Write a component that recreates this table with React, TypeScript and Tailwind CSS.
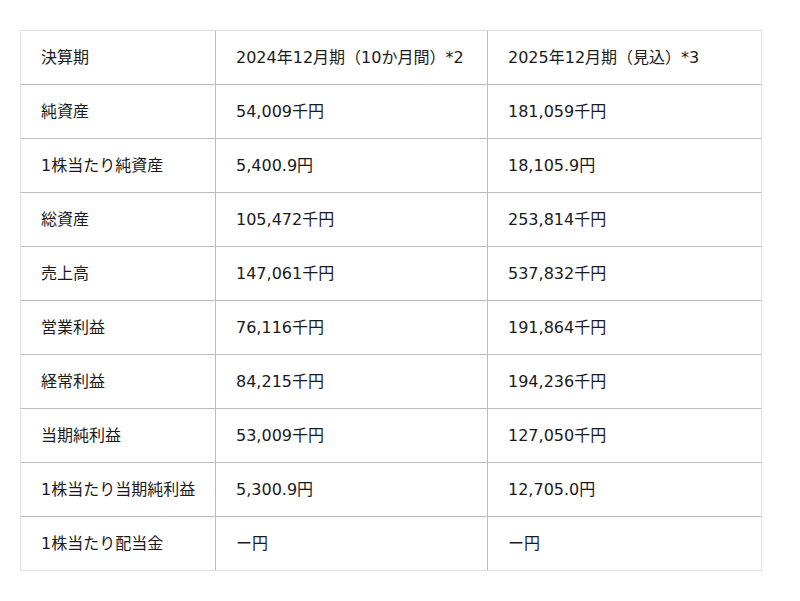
const rows: [string, string, string][] = [
  ["決算期", "2024年12月期（10か月間）*2", "2025年12月期（見込）*3"],
  ["純資産", "54,009千円", "181,059千円"],
  ["1株当たり純資産", "5,400.9円", "18,105.9円"],
  ["総資産", "105,472千円", "253,814千円"],
  ["売上高", "147,061千円", "537,832千円"],
  ["営業利益", "76,116千円", "191,864千円"],
  ["経常利益", "84,215千円", "194,236千円"],
  ["当期純利益", "53,009千円", "127,050千円"],
  ["1株当たり当期純利益", "5,300.9円", "12,705.0円"],
  ["1株当たり配当金", "ー円", "ー円"],
];

export default function App() {
  return (
    <div
      className="w-[800px] h-[601px] bg-white pt-[30px] pl-[20px] text-[16px] text-[#1a1a1a]"
      style={{ fontFamily: '"DejaVu Sans", "Noto Sans CJK JP", sans-serif' }}
    >
      <div className="w-[742px] border border-[#e0e0e0]">
        {rows.map((r, i) => (
          <div
            key={i}
            className={
              i === 0
                ? "grid grid-cols-[195px_272px_1fr] h-[53px]"
                : "grid grid-cols-[195px_272px_1fr] h-[54px] border-t border-[#bdbdbd]"
            }
          >
            <div className="flex items-center pl-[20px] border-r border-[#bdbdbd]">{r[0]}</div>
            <div className="flex items-center pl-[20px] border-r border-[#bdbdbd]">{r[1]}</div>
            <div className="flex items-center pl-[20px]">{r[2]}</div>
          </div>
        ))}
      </div>
    </div>
  );
}
